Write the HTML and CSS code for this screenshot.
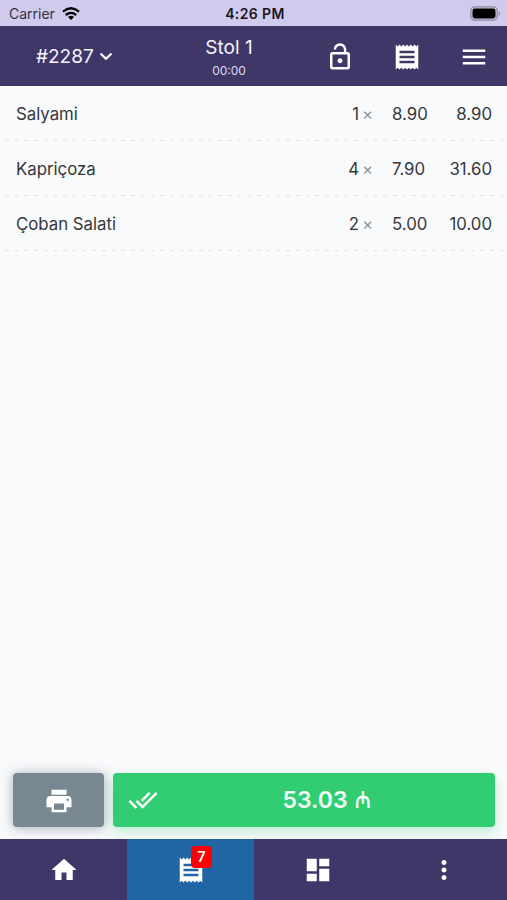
FILE: index.html
```html
<!DOCTYPE html>
<html lang="az">
<head>
<meta charset="utf-8">
<title>Stol 1</title>
<link rel="stylesheet" href="styles.css">
</head>
<body>
<div class="status">
  <div class="carrier"><span>Carrier</span>
    <svg class="wifi" viewBox="0 0 18 13"><g fill="none" stroke="#000" stroke-width="2.3"><path d="M1 4.6Q9-2 17 4.6"/><path d="M3.8 8Q9 3.7 14.2 8"/></g><path d="M6 10Q9 7.6 12 10L9 13z"/></svg>
  </div>
  <div class="clock">4:26 PM</div>
  <div class="power"><svg class="battery" viewBox="0 0 31 15"><rect x=".8" y=".8" width="26.4" height="13.4" rx="4" fill="#c9c4de" stroke="#8f8aa3" stroke-width="1.2"/><rect x="2.5" y="2.5" width="23" height="10" rx="2.4"/><path d="M28.7 5.2q3 2.3 0 4.6z" fill="#8f8aa3"/></svg></div>
</div>
<header class="header">
  <div class="order"><span>#2287</span><svg class="chevron" viewBox="0 0 14 9"><path d="M1.6 1.6L7 6.8l5.4-5.2" fill="none" stroke="#fff" stroke-width="2.2"/></svg></div>
  <div class="title"><div class="table-name">Stol 1</div><div class="timer">00:00</div></div>
  <div class="actions">
    <svg class="icon" viewBox="0 0 24 24"><path d="M12 17c1.1 0 2-.9 2-2s-.9-2-2-2-2 .9-2 2 .9 2 2 2zm6-9h-1V6c0-2.76-2.24-5-5-5S7 3.24 7 6h1.9c0-1.71 1.39-3.1 3.1-3.1s3.1 1.39 3.1 3.1v2H6c-1.1 0-2 .9-2 2v10c0 1.1.9 2 2 2h12c1.1 0 2-.9 2-2V10c0-1.1-.9-2-2-2zm0 12H6V10h12v10z"/></svg>
    <svg class="icon" viewBox="0 0 24 24"><path d="M18 17H6v-2h12v2zm0-4H6v-2h12v2zm0-4H6V7h12v2zM3 22l1.5-1.5L6 22l1.5-1.5L9 22l1.5-1.5L12 22l1.5-1.5L15 22l1.5-1.5L18 22l1.5-1.5L21 22V2l-1.5 1.5L18 2l-1.5 1.5L15 2l-1.5 1.5L12 2l-1.5 1.5L9 2 7.5 3.5 6 2 4.5 3.5 3 2v20z"/></svg>
    <svg class="icon" viewBox="0 0 24 24"><path d="M3 18h18v-2H3v2zm0-5h18v-2H3v2zm0-7v2h18V6H3z"/></svg>
  </div>
</header>
<main class="list">
  <div class="row"><span class="name">Salyami</span><span class="qty">1</span><span class="times">×</span><span class="price">8.90</span><span class="sum">8.90</span></div>
  <div class="row"><span class="name">Kapriçoza</span><span class="qty">4</span><span class="times">×</span><span class="price">7.90</span><span class="sum">31.60</span></div>
  <div class="row"><span class="name">Çoban Salati</span><span class="qty">2</span><span class="times">×</span><span class="price">5.00</span><span class="sum">10.00</span></div>
</main>
<div class="buttons">
  <div class="print"><svg class="icon" viewBox="0 0 24 24"><path d="M19 8H5c-1.66 0-3 1.34-3 3v6h4v4h12v-4h4v-6c0-1.66-1.34-3-3-3zm-3 11H8v-5h8v5zm3-7c-.55 0-1-.45-1-1s.45-1 1-1 1 .45 1 1-.45 1-1 1zm-1-9H6v4h12V3z"/></svg></div>
  <div class="pay"><svg class="icon" viewBox="0 0 24 24"><path d="M18 7l-1.41-1.41-6.34 6.34 1.41 1.41L18 7zm4.24-1.41L11.66 16.17 7.48 12l-1.41 1.41L11.66 19l12-12-1.42-1.41zM.41 13.41L6 19l1.41-1.41L1.83 12 .41 13.41z"/></svg><span class="total"><span>53.03</span><span class="currency">₼</span></span></div>
</div>
<nav class="tabs">
  <div class="tab"><svg class="icon" viewBox="0 0 24 24"><path d="M10 20v-6h4v6h5v-8h3L12 3 2 12h3v8z"/></svg></div>
  <div class="tab active"><svg class="icon" viewBox="0 0 24 24"><path d="M18 17H6v-2h12v2zm0-4H6v-2h12v2zm0-4H6V7h12v2zM3 22l1.5-1.5L6 22l1.5-1.5L9 22l1.5-1.5L12 22l1.5-1.5L15 22l1.5-1.5L18 22l1.5-1.5L21 22V2l-1.5 1.5L18 2l-1.5 1.5L15 2l-1.5 1.5L12 2l-1.5 1.5L9 2 7.5 3.5 6 2 4.5 3.5 3 2v20z"/></svg><span class="badge">7</span></div>
  <div class="tab"><svg class="icon" viewBox="0 0 24 24"><path d="M3 13h8V3H3v10zm0 8h8v-6H3v6zm10 0h8V11h-8v10zm0-18v6h8V3h-8z"/></svg></div>
  <div class="tab"><svg class="icon" viewBox="0 0 24 24"><path d="M12 8c1.1 0 2-.9 2-2s-.9-2-2-2-2 .9-2 2 .9 2 2 2zm0 2c-1.1 0-2 .9-2 2s.9 2 2 2 2-.9 2-2-.9-2-2-2zm0 6c-1.1 0-2 .9-2 2s.9 2 2 2 2-.9 2-2-.9-2-2-2z"/></svg></div>
</nav>
</body>
</html>
```
FILE: styles.css
```css
* { box-sizing: border-box; }
body {
  margin: 0;
  height: 900px;
  display: flex;
  flex-direction: column;
  background: #f9fafc;
  color: #36373b;
  font-family: Inter, "Liberation Sans", sans-serif;
}
svg { display: block; flex: none; }
.icon { width: 30px; height: 30px; fill: #fff; }
.status {
  height: 26px;
  display: grid;
  grid-template-columns: 1fr auto 1fr;
  align-items: center;
  padding: 1px 6px 0 9px;
  background: #d0cbed;
  color: #17161c;
  font-size: 14px;
}
.carrier { display: flex; align-items: center; gap: 7px; color: #33313d; }
.wifi { width: 18px; height: 13px; }
.clock { font-weight: 600; letter-spacing: 0.4px; }
.power { display: flex; justify-content: flex-end; }
.battery { width: 31px; height: 15px; }
.header {
  height: 60px;
  display: grid;
  grid-template-columns: 148px 162px 197px;
  align-items: center;
  background: #3f3768;
  color: #f6f4ff;
}
.order { display: flex; align-items: center; gap: 5px; padding-left: 36px; font-size: 19px; }
.chevron { width: 14px; height: 9px; }
.title { padding-top: 2px; text-align: center; }
.table-name { font-size: 19px; line-height: 24px; }
.timer { font-size: 12px; line-height: 14px; margin-top: 4px; color: #dedaf0; }
.actions { display: flex; gap: 37px; padding: 2px 0 0 15px; }
.list { flex: 1; }
.row {
  height: 55px;
  display: grid;
  grid-template-columns: 1fr 20px 14px 54px 65px;
  align-items: center;
  padding: 0 15px 0 16px;
  font-size: 16.8px;
  background: repeating-linear-gradient(90deg, #dfe1e3 0 3.5px, transparent 3.5px 9.7px) 4.5px 54px / 600px 1px no-repeat;
}
.qty, .sum { text-align: right; }
.times { text-align: right; color: #8a9799; }
.price { padding-left: 19px; }
.buttons { display: flex; gap: 9px; padding: 0 12px 12px 13px; }
.print, .pay { height: 54px; border-radius: 4px; display: flex; align-items: center; }
.print { width: 91px; padding-top: 1px; justify-content: center; background: #778892; box-shadow: 0 1px 12px rgba(80, 95, 105, .5); }
.pay { flex: 1; padding-left: 15px; background: #32cd72; box-shadow: 0 5px 12px rgba(50, 205, 114, .3); }
.total {
  flex: 1;
  display: flex;
  justify-content: center;
  align-items: baseline;
  gap: 7px;
  color: #f2fff7;
  font-size: 23px;
  font-weight: 600;
}
.currency {
  width: 16px;
  font-family: "Noto Sans", "DejaVu Sans", sans-serif;
  line-height: 26px;
  transform: scaleX(0.8);
  transform-origin: left;
}
.tabs { height: 61px; display: grid; grid-template-columns: 127px 127px 127px 126px; background: #3f3768; }
.tab { position: relative; display: flex; align-items: center; justify-content: center; }
.active { background: #2066a5; }
.badge {
  position: absolute;
  left: 64px;
  top: 7px;
  width: 21px;
  height: 22px;
  border-radius: 4px;
  background: #fb0007;
  color: #fff;
  font-size: 14px;
  font-weight: 600;
  line-height: 22px;
  text-align: center;
}
```
